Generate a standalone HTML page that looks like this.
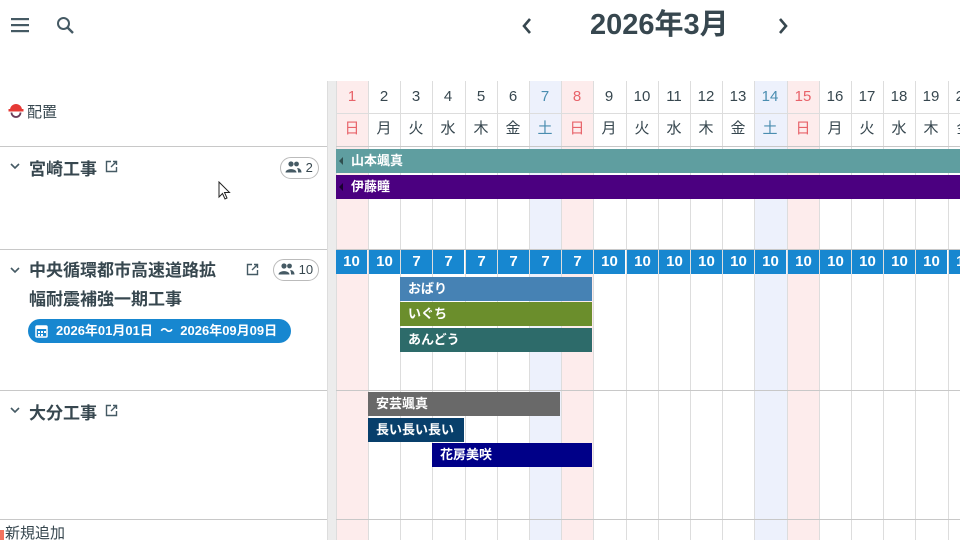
<!DOCTYPE html>
<html><head><meta charset="utf-8">
<style>
*{margin:0;padding:0;box-sizing:border-box}
body{width:960px;height:540px;overflow:hidden;background:#fff;position:relative;font-family:"Liberation Sans","Noto Sans CJK JP",sans-serif;color:#37474f}
.a{position:absolute}
.col{position:absolute;top:81px;height:459px;width:33px;border-left:1px solid #ddd}
.sun{background:#fdecec}
.sat{background:#edf1fc}
.d{position:absolute;width:32px;text-align:center;font-size:15px;line-height:32px;color:#37474f}
.hl{position:absolute;left:0;height:1px;background:#c8c8c8}
.num{position:absolute;top:250px;height:24px;width:31px;background:#1787d0;color:#fff;font-size:15px;font-weight:bold;text-align:center;line-height:24px}
.bar{position:absolute;height:24px;color:#fff;font-size:13px;font-weight:bold;line-height:24px;padding-left:8px;white-space:nowrap;overflow:hidden}
.pt{position:absolute;font-size:17px;font-weight:bold;color:#37474f}
.badge{position:absolute;height:22px;border:1px solid #bbb;border-radius:11px;font-size:13px;line-height:20px;padding-left:4px;color:#37474f}
</style></head><body>
<svg class="a" style="left:10px;top:16px" width="20" height="18" viewBox="0 0 20 18"><rect x="1" y="2" width="18" height="2.2" fill="#455a64"/><rect x="1" y="8" width="18" height="2.2" fill="#455a64"/><rect x="1" y="14" width="18" height="2.2" fill="#455a64"/></svg>
<svg class="a" style="left:55px;top:15px" width="22" height="22" viewBox="0 0 22 22"><circle cx="8.5" cy="8.5" r="5.5" fill="none" stroke="#455a64" stroke-width="2"/><line x1="12.5" y1="12.5" x2="18" y2="18" stroke="#455a64" stroke-width="2.4"/></svg>
<svg class="a" style="left:520px;top:16px" width="14" height="20" viewBox="0 0 14 20"><path d="M10 3 L4 10 L10 17" fill="none" stroke="#37474f" stroke-width="2.6"/></svg>
<div class="a" style="left:590px;top:6px;font-size:29px;font-weight:bold;color:#37474f;line-height:38px">2026年3月</div>
<svg class="a" style="left:776px;top:16px" width="14" height="20" viewBox="0 0 14 20"><path d="M4 3 L10 10 L4 17" fill="none" stroke="#37474f" stroke-width="2.6"/></svg>

<svg class="a" style="left:7px;top:102px" width="18" height="17" viewBox="0 0 18 17"><path d="M3 8 A6 6 0 0 1 15 8 Z" fill="#e53935"/><rect x="1.5" y="7" width="15" height="2.5" fill="#e53935"/><path d="M4.5 10.5 A4.5 4.5 0 0 0 13.5 10.5" fill="none" stroke="#6a3d5a" stroke-width="1.8"/></svg>
<div class="a" style="left:27px;top:101px;font-size:15px;color:#37474f">配置</div>
<div class="hl" style="top:146px;width:327px"></div>
<div class="hl" style="top:249px;width:327px"></div>
<div class="hl" style="top:390px;width:327px"></div>
<div class="hl" style="top:519px;width:327px"></div>
<div class="a" style="left:327px;top:81px;width:9px;height:459px;background:#ececec;border-left:1px solid #ddd"></div>

<svg class="a" style="left:9px;top:161px" width="12" height="10" viewBox="0 0 12 10"><path d="M2 3 L6 7 L10 3" fill="none" stroke="#455a64" stroke-width="1.6"/></svg>
<div class="pt" style="left:29px;top:155px">宮崎工事</div>
<svg class="a" style="left:105px;top:160px" width="13" height="13" viewBox="0 0 13 13"><path d="M6 1.5 H1.5 V11.5 H11.5 V7 M8 1.5 H11.5 V5 M11.5 1.5 L6 7" fill="none" stroke="#455a64" stroke-width="1.4"/></svg>
<div class="badge" style="left:280px;top:157px;width:39px"><svg width="17" height="12" viewBox="0 0 17 12" style="vertical-align:-1px"><circle cx="6" cy="3" r="2.6" fill="#455a64"/><path d="M0.5 11.5 C0.5 7 11.5 7 11.5 11.5Z" fill="#455a64"/><circle cx="11.5" cy="3" r="2.4" fill="#455a64"/><path d="M12 7 C15 7 16.5 9 16.5 11.5 H13 C13 9.5 12.8 8 12 7Z" fill="#455a64"/></svg> 2</div>
<svg class="a" style="left:218px;top:181px" width="14" height="20" viewBox="0 0 14 20"><path d="M1 1 L1 16 L4.5 12.5 L7 18 L9 17 L6.5 11.5 L11.5 11.5 Z" fill="#fff" stroke="#222" stroke-width="1"/></svg>

<svg class="a" style="left:9px;top:265px" width="12" height="10" viewBox="0 0 12 10"><path d="M2 3 L6 7 L10 3" fill="none" stroke="#455a64" stroke-width="1.6"/></svg>
<div class="pt" style="left:29px;top:256px;line-height:29px;width:210px">中央循環都市高速道路拡<br>幅耐震補強一期工事</div>
<svg class="a" style="left:246px;top:263px" width="13" height="13" viewBox="0 0 13 13"><path d="M6 1.5 H1.5 V11.5 H11.5 V7 M8 1.5 H11.5 V5 M11.5 1.5 L6 7" fill="none" stroke="#455a64" stroke-width="1.4"/></svg>
<div class="badge" style="left:273px;top:259px;width:46px"><svg width="17" height="12" viewBox="0 0 17 12" style="vertical-align:-1px"><circle cx="6" cy="3" r="2.6" fill="#455a64"/><path d="M0.5 11.5 C0.5 7 11.5 7 11.5 11.5Z" fill="#455a64"/><circle cx="11.5" cy="3" r="2.4" fill="#455a64"/><path d="M12 7 C15 7 16.5 9 16.5 11.5 H13 C13 9.5 12.8 8 12 7Z" fill="#455a64"/></svg> 10</div>
<div class="a" style="left:28px;top:319px;width:263px;height:24px;border-radius:12px;background:#1787d0;color:#fff;font-size:13px;font-weight:bold;line-height:24px;padding-left:28px;white-space:nowrap">2026年01月01日 &nbsp;～&nbsp; 2026年09月09日</div>
<svg class="a" style="left:35px;top:324px" width="13" height="14" viewBox="0 0 13 14"><rect x="1" y="2" width="11" height="11" rx="1" fill="none" stroke="#fff" stroke-width="1.5"/><rect x="1" y="2" width="11" height="3" fill="#fff"/><rect x="3" y="7" width="2" height="2" fill="#fff"/><rect x="6" y="7" width="2" height="2" fill="#fff"/><rect x="9" y="7" width="2" height="2" fill="#fff"/><rect x="3" y="10" width="2" height="2" fill="#fff"/><rect x="6" y="10" width="2" height="2" fill="#fff"/></svg>

<svg class="a" style="left:9px;top:405px" width="12" height="10" viewBox="0 0 12 10"><path d="M2 3 L6 7 L10 3" fill="none" stroke="#455a64" stroke-width="1.6"/></svg>
<div class="pt" style="left:29px;top:399px">大分工事</div>
<svg class="a" style="left:105px;top:404px" width="13" height="13" viewBox="0 0 13 13"><path d="M6 1.5 H1.5 V11.5 H11.5 V7 M8 1.5 H11.5 V5 M11.5 1.5 L6 7" fill="none" stroke="#455a64" stroke-width="1.4"/></svg>

<div class="a" style="left:0;top:530px;width:4px;height:10px;background:#f4735f"></div>
<div class="a" style="left:5px;top:522px;font-size:15px;color:#37474f">新規追加</div>

<div class="col sun" style="left:336px"></div>
<div class="col" style="left:368px"></div>
<div class="col" style="left:400px"></div>
<div class="col" style="left:432px"></div>
<div class="col" style="left:465px"></div>
<div class="col" style="left:497px"></div>
<div class="col sat" style="left:529px"></div>
<div class="col sun" style="left:561px"></div>
<div class="col" style="left:593px"></div>
<div class="col" style="left:626px"></div>
<div class="col" style="left:658px"></div>
<div class="col" style="left:690px"></div>
<div class="col" style="left:722px"></div>
<div class="col sat" style="left:754px"></div>
<div class="col sun" style="left:787px"></div>
<div class="col" style="left:819px"></div>
<div class="col" style="left:851px"></div>
<div class="col" style="left:883px"></div>
<div class="col" style="left:915px"></div>
<div class="col" style="left:948px"></div>

<div class="hl" style="left:336px;top:113px;width:624px;background:#ddd"></div>
<div class="hl" style="left:336px;top:146px;width:624px"></div>
<div class="hl" style="left:336px;top:249px;width:624px"></div>
<div class="hl" style="left:336px;top:390px;width:624px"></div>
<div class="hl" style="left:336px;top:519px;width:624px"></div>

<div class="d" style="left:336px;top:81px;color:#e8636a">1</div><div class="d" style="left:336px;top:113px;color:#e8636a">日</div>
<div class="d" style="left:368px;top:81px">2</div><div class="d" style="left:368px;top:113px">月</div>
<div class="d" style="left:400px;top:81px">3</div><div class="d" style="left:400px;top:113px">火</div>
<div class="d" style="left:432px;top:81px">4</div><div class="d" style="left:432px;top:113px">水</div>
<div class="d" style="left:465px;top:81px">5</div><div class="d" style="left:465px;top:113px">木</div>
<div class="d" style="left:497px;top:81px">6</div><div class="d" style="left:497px;top:113px">金</div>
<div class="d" style="left:529px;top:81px;color:#4a8db0">7</div><div class="d" style="left:529px;top:113px;color:#4a8db0">土</div>
<div class="d" style="left:561px;top:81px;color:#e8636a">8</div><div class="d" style="left:561px;top:113px;color:#e8636a">日</div>
<div class="d" style="left:593px;top:81px">9</div><div class="d" style="left:593px;top:113px">月</div>
<div class="d" style="left:626px;top:81px">10</div><div class="d" style="left:626px;top:113px">火</div>
<div class="d" style="left:658px;top:81px">11</div><div class="d" style="left:658px;top:113px">水</div>
<div class="d" style="left:690px;top:81px">12</div><div class="d" style="left:690px;top:113px">木</div>
<div class="d" style="left:722px;top:81px">13</div><div class="d" style="left:722px;top:113px">金</div>
<div class="d" style="left:754px;top:81px;color:#4a8db0">14</div><div class="d" style="left:754px;top:113px;color:#4a8db0">土</div>
<div class="d" style="left:787px;top:81px;color:#e8636a">15</div><div class="d" style="left:787px;top:113px;color:#e8636a">日</div>
<div class="d" style="left:819px;top:81px">16</div><div class="d" style="left:819px;top:113px">月</div>
<div class="d" style="left:851px;top:81px">17</div><div class="d" style="left:851px;top:113px">火</div>
<div class="d" style="left:883px;top:81px">18</div><div class="d" style="left:883px;top:113px">水</div>
<div class="d" style="left:915px;top:81px">19</div><div class="d" style="left:915px;top:113px">木</div>
<div class="d" style="left:948px;top:81px">20</div><div class="d" style="left:948px;top:113px">金</div>

<div class="bar" style="left:336px;top:149px;width:624px;background:#5f9ea0;padding-left:15px">山本颯真</div>
<div class="bar" style="left:336px;top:175px;width:624px;background:#4b0080;padding-left:15px">伊藤瞳</div>
<svg class="a" style="left:338px;top:156px" width="6" height="10"><path d="M5 1 L1 5 L5 9Z" fill="#2f4f4f"/></svg>
<svg class="a" style="left:338px;top:182px" width="6" height="10"><path d="M5 1 L1 5 L5 9Z" fill="#1a0030"/></svg>

<div class="num" style="left:336px">10</div>
<div class="num" style="left:369px">10</div>
<div class="num" style="left:401px">7</div>
<div class="num" style="left:433px">7</div>
<div class="num" style="left:466px">7</div>
<div class="num" style="left:498px">7</div>
<div class="num" style="left:530px">7</div>
<div class="num" style="left:562px">7</div>
<div class="num" style="left:594px">10</div>
<div class="num" style="left:627px">10</div>
<div class="num" style="left:659px">10</div>
<div class="num" style="left:691px">10</div>
<div class="num" style="left:723px">10</div>
<div class="num" style="left:755px">10</div>
<div class="num" style="left:788px">10</div>
<div class="num" style="left:820px">10</div>
<div class="num" style="left:852px">10</div>
<div class="num" style="left:884px">10</div>
<div class="num" style="left:916px">10</div>
<div class="num" style="left:949px">10</div>

<div class="bar" style="left:400px;top:277px;width:192px;background:#4682b4">おばり</div>
<div class="bar" style="left:400px;top:302px;width:192px;background:#6b8e2c">いぐち</div>
<div class="bar" style="left:400px;top:328px;width:192px;background:#2d6b6a">あんどう</div>

<div class="bar" style="left:368px;top:392px;width:192px;background:#696969">安芸颯真</div>
<div class="bar" style="left:368px;top:418px;width:96px;background:#083f6b">長い長い長い</div>
<div class="bar" style="left:432px;top:443px;width:160px;background:#000088">花房美咲</div>
</body></html>
